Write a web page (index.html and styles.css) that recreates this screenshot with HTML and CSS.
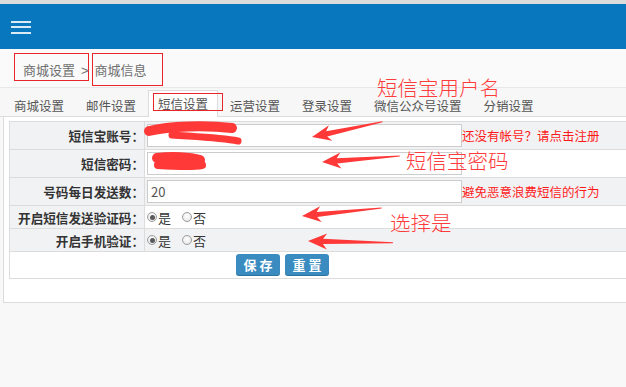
FILE: index.html
```html
<!DOCTYPE html>
<html lang="zh-CN">
<head>
<meta charset="utf-8">
<title>短信设置</title>
<link rel="stylesheet" href="styles.css">
</head>
<body>
<div class="topline"></div>
<header class="navbar">
  <div class="burger"><span></span><span></span><span></span></div>
</header>
<div class="breadcrumb"><span>商城设置</span><span class="sep">&gt;</span><span>商城信息</span></div>
<nav class="tabs">
  <span class="tab">商城设置</span>
  <span class="tab">邮件设置</span>
  <span class="tab active">短信设置</span>
  <span class="tab">运营设置</span>
  <span class="tab">登录设置</span>
  <span class="tab">微信公众号设置</span>
  <span class="tab">分销设置</span>
</nav>
<main class="panel">
  <div class="form">
    <div class="row alt">
      <div class="lbl">短信宝账号：</div>
      <div class="val"><input class="inp" type="text" value=""><span class="note">还没有帐号？请点击注册</span></div>
    </div>
    <div class="row">
      <div class="lbl">短信密码：</div>
      <div class="val"><input class="inp" type="text" value=""></div>
    </div>
    <div class="row alt">
      <div class="lbl">号码每日发送数：</div>
      <div class="val"><input class="inp" type="text" value="20"><span class="note">避免恶意浪费短信的行为</span></div>
    </div>
    <div class="row short">
      <div class="lbl">开启短信发送验证码：</div>
      <div class="val"><span class="opt"><i class="radio on"></i>是</span><span class="opt"><i class="radio"></i>否</span></div>
    </div>
    <div class="row short alt">
      <div class="lbl">开启手机验证：</div>
      <div class="val"><span class="opt"><i class="radio on"></i>是</span><span class="opt"><i class="radio"></i>否</span></div>
    </div>
    <div class="btnrow">
      <button class="btn">保存</button>
      <button class="btn">重置</button>
    </div>
  </div>
</main>

<svg class="marks" width="626" height="387" viewBox="0 0 626 387" xmlns="http://www.w3.org/2000/svg">
  <g fill="none" stroke="#e8262a" stroke-width="1">
    <rect x="14.5" y="53.5" width="74" height="27"/>
    <rect x="92.5" y="53.5" width="70" height="32"/>
    <rect x="153.5" y="93.5" width="69" height="17"/>
  </g>
  <g stroke="#ff3838" stroke-linecap="round" fill="none">
    <path d="M149 131 C170 126, 205 125, 232 128" stroke-width="10"/>
    <path d="M172 135 C200 137, 222 138, 238 141" stroke-width="7"/>
    <path d="M157 158 C172 156, 190 157, 200 160" stroke-width="10"/>
    <path d="M158 165 C175 166, 192 167, 202 165" stroke-width="8"/>
  </g>
  <g fill="#ff3838">
    <polygon transform="translate(312 137) rotate(-12.1)" points="0,0 19,-8 15,-2.6 72,-0.6 72,0.4 15,2.6 19,8"/>
    <polygon transform="translate(322 162) rotate(-4.4)" points="0,0 19,-8 15,-2.6 78,-0.6 78,0.4 15,2.6 19,8"/>
    <polygon transform="translate(302 216) rotate(-5.7)" points="0,0 19,-8 15,-2.6 80,-0.6 80,0.4 15,2.6 19,8"/>
    <polygon transform="translate(308 241) rotate(1.3)" points="0,0 19,-8 15,-2.6 85,-0.6 85,0.4 15,2.6 19,8"/>
  </g>
</svg>
<div class="anno a1">短信宝用户名</div>
<div class="anno a2">短信宝密码</div>
<div class="anno a3">选择是</div>
</body>
</html>
```
FILE: styles.css
```css
html, body {
  margin: 0;
  padding: 0;
}
body {
  position: relative;
  width: 626px;
  height: 387px;
  overflow: hidden;
  background: #f8f8f8;
  font-family: "Noto Sans CJK SC", "Liberation Sans", sans-serif;
}
.topline {
  height: 4px;
  background: #dcdcdc;
}
.navbar {
  height: 45px;
  background: #0877bd;
  display: flex;
  align-items: center;
  padding-left: 11px;
}
.burger {
  width: 20px;
  display: flex;
  flex-direction: column;
  gap: 3.5px;
  margin-top: 1px;
}
.burger span {
  display: block;
  height: 2px;
  background: rgba(255, 255, 255, 0.85);
}
.breadcrumb {
  height: 38px;
  box-sizing: content-box;
  background: #fafafa;
  border-bottom: 1px solid #e8e8e8;
  padding-left: 23px;
  font-size: 13px;
  line-height: 42px;
  color: #6f6f6f;
}
.breadcrumb .sep {
  font-family: "Liberation Sans", sans-serif;
  padding: 0 6px;
}
.tabs {
  height: 28px;
  background: #f7f7f7;
  border-bottom: 1px solid #dcdcdc;
  display: flex;
  align-items: flex-end;
  padding-left: 4px;
}
.tab {
  height: 25px;
  box-sizing: border-box;
  padding: 6px 9px 0;
  line-height: 14px;
  margin-right: 2px;
  margin-bottom: -1px;
  border: 1px solid transparent;
  border-bottom: none;
  font-size: 12.5px;
  color: #555;
  white-space: nowrap;
}
.tab.active {
  background: #fff;
  border-color: #dcdcdc;
  height: 27px;
  padding-top: 6px;
}
.panel {
  display: block;
  margin-left: 3px;
  background: #fff;
  border-left: 1px solid #dcdcdc;
  border-bottom: 1px solid #dcdcdc;
  padding: 4px 0 23px 5px;
}
.form {
  border-top: 1px solid #dcdcdc;
  border-left: 1px solid #dcdcdc;
}
.row {
  display: grid;
  grid-template-columns: 135px 1fr;
  height: 28px;
  box-sizing: border-box;
  border-bottom: 1px solid #dcdcdc;
}
.row.short {
  height: 23px;
}
.row.alt .val {
  background: #f1f2f4;
}
.lbl {
  background: #f1f2f4;
  border-right: 1px solid #dcdcdc;
  display: flex;
  align-items: center;
  justify-content: flex-end;
  padding-right: 0;
  font-size: 12.6px;
  font-weight: bold;
  color: #333;
  white-space: nowrap;
}
.val {
  display: flex;
  align-items: center;
  padding-left: 2px;
}
.inp {
  width: 315px;
  height: 23px;
  box-sizing: border-box;
  margin: 0;
  border: 1px solid #cccccc;
  background: #fff;
  padding: 0 0 0 3px;
  font-family: "Noto Sans CJK SC", "Liberation Sans", sans-serif;
  font-size: 13px;
  color: #555;
  outline: none;
}
.note {
  font-size: 12.5px;
  color: #ff1a1a;
  white-space: nowrap;
}
.opt {
  display: inline-flex;
  align-items: center;
  font-size: 13px;
  color: #333;
  margin-right: 11px;
}
.radio {
  position: relative;
  display: inline-block;
  width: 10px;
  height: 10px;
  box-sizing: border-box;
  border-radius: 50%;
  border: 1px solid #9c9c9c;
  background: radial-gradient(circle at 50% 40%, #ffffff, #e2e2e2);
  margin-right: 1px;
}
.radio.on::after {
  content: "";
  position: absolute;
  left: 1.5px;
  top: 1.5px;
  width: 5px;
  height: 5px;
  border-radius: 50%;
  background: #5a5a5a;
}
.btnrow {
  height: 27px;
  box-sizing: border-box;
  border-bottom: 1px solid #dcdcdc;
  padding: 2px 0 0 226px;
  display: flex;
  align-items: flex-start;
  gap: 5px;
}
.btn {
  width: 44px;
  height: 22px;
  margin: 0;
  padding: 0 0 0 3px;
  border: none;
  border-radius: 3px;
  background: #3a8bbf;
  box-shadow: inset 0 -1px 0 rgba(0, 0, 0, 0.18);
  color: #fff;
  font-family: "Noto Sans CJK SC", sans-serif;
  font-size: 13px;
  font-weight: bold;
  letter-spacing: 3px;
  line-height: 22px;
}
.marks {
  position: absolute;
  left: 0;
  top: 0;
  pointer-events: none;
}
.anno {
  position: absolute;
  color: #ff3b3b;
  font-size: 20.5px;
  font-weight: 300;
  line-height: 20px;
  white-space: nowrap;
}
.a1 { left: 377px; top: 77px; }
.a2 { left: 406px; top: 150px; }
.a3 { left: 390px; top: 212px; }
```
